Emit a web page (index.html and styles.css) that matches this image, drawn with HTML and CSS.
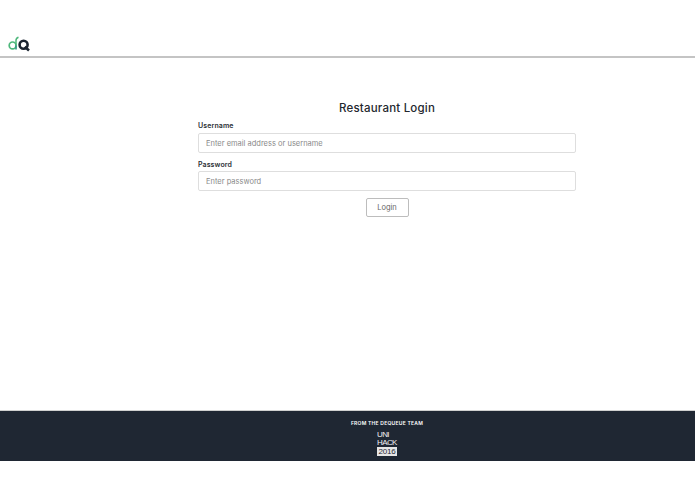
FILE: index.html
```html
<!DOCTYPE html>
<html lang="en">
<head>
<meta charset="utf-8">
<title>Restaurant Login</title>
<link rel="stylesheet" href="styles.css">
</head>
<body>
<header class="topbar">
  <svg class="logo" width="24" height="16" viewBox="0 0 24 16" aria-label="dQ">
    <circle cx="4.6" cy="9.4" r="3.4" fill="none" stroke="#4fb87c" stroke-width="1.7"/>
    <path d="M8 9.5 V4.5 Q8 2 10.5 1.2" fill="none" stroke="#4fb87c" stroke-width="1.5"/>
    <path d="M8 9.5 V13.5" fill="none" stroke="#3a9a8a" stroke-width="1.7"/>
    <circle cx="15.6" cy="8.8" r="4" fill="none" stroke="#1b2430" stroke-width="2.6"/>
    <path d="M16.8 10.8 L21 14.4" stroke="#1b2430" stroke-width="2.6"/>
  </svg>
</header>
<main class="content">
  <h1 class="title">Restaurant Login</h1>
  <form class="form">
    <label class="label" for="user">Username</label>
    <input class="field" id="user" type="text" placeholder="Enter email address or username">
    <label class="label label-second" for="pass">Password</label>
    <input class="field" id="pass" type="password" placeholder="Enter password">
    <button class="btn" type="button">Login</button>
  </form>
</main>
<footer class="footer">
  <div class="team">FROM THE DEQUEUE TEAM</div>
  <div class="unihack">
    <span>UNI</span>
    <span>HACK</span>
    <span class="year">2016</span>
  </div>
</footer>
</body>
</html>
```
FILE: styles.css
```css
* { box-sizing: border-box; }
html, body { margin: 0; padding: 0; }
body {
  background: #fff;
  color: #2a2f36;
  font-family: "Inter", "Liberation Sans", sans-serif;
  width: 695px;
  height: 494px;
  display: flex;
  flex-direction: column;
}
.topbar {
  height: 58px;
  border-bottom: 2px solid #c4c4c4;
  padding: 36px 0 0 8px;
}
.logo { display: block; }
.content {
  height: 352px;
  padding: 43px 119px 0 198px;
  display: flex;
  flex-direction: column;
}
.title {
  margin: 0 0 5px;
  font-size: 11.5px;
  line-height: 15px;
  font-weight: 500;
  text-align: center;
  color: #23272e;
  letter-spacing: 0.2px;
}
.form { display: flex; flex-direction: column; }
.label {
  font-size: 7px;
  line-height: 9px;
  font-weight: 600;
  color: #2b2f35;
  margin-bottom: 3px;
  letter-spacing: 0.1px;
}
.label-second { margin-top: 7px; margin-bottom: 2px; }
.field {
  height: 20px;
  width: 378px;
  border: 1px solid #dedede;
  border-radius: 2px;
  padding: 0 7px;
  font-family: inherit;
  font-size: 7.5px;
  outline: none;
  background: #fff;
}
.field::placeholder { color: #8a8a8a; opacity: 1; }
.btn {
  align-self: center;
  margin-top: 7px;
  width: 43px;
  height: 19px;
  background: #fff;
  border: 1px solid #bdbdbd;
  border-radius: 2px;
  font-family: inherit;
  font-size: 7.5px;
  color: #666;
  padding: 0;
}
.footer {
  height: 51px;
  background: #1f2733;
  border-top: 1px solid #d0d0d0;
  display: flex;
  flex-direction: column;
  align-items: center;
  padding: 9px 119px 0 198px;
  color: #fff;
}
.team {
  font-size: 5px;
  line-height: 6px;
  font-weight: 600;
  letter-spacing: 0.25px;
}
.unihack {
  margin-top: 5px;
  width: 20px;
  display: flex;
  flex-direction: column;
  font-family: "Liberation Sans", sans-serif;
  font-size: 8px;
  line-height: 8px;
  letter-spacing: -0.6px;
  color: #f2f2f2;
}
.year {
  background: #e6e6e6;
  color: #1f2733;
  text-align: center;
  font-size: 8px;
  line-height: 9px;
  letter-spacing: -0.2px;
}
```
